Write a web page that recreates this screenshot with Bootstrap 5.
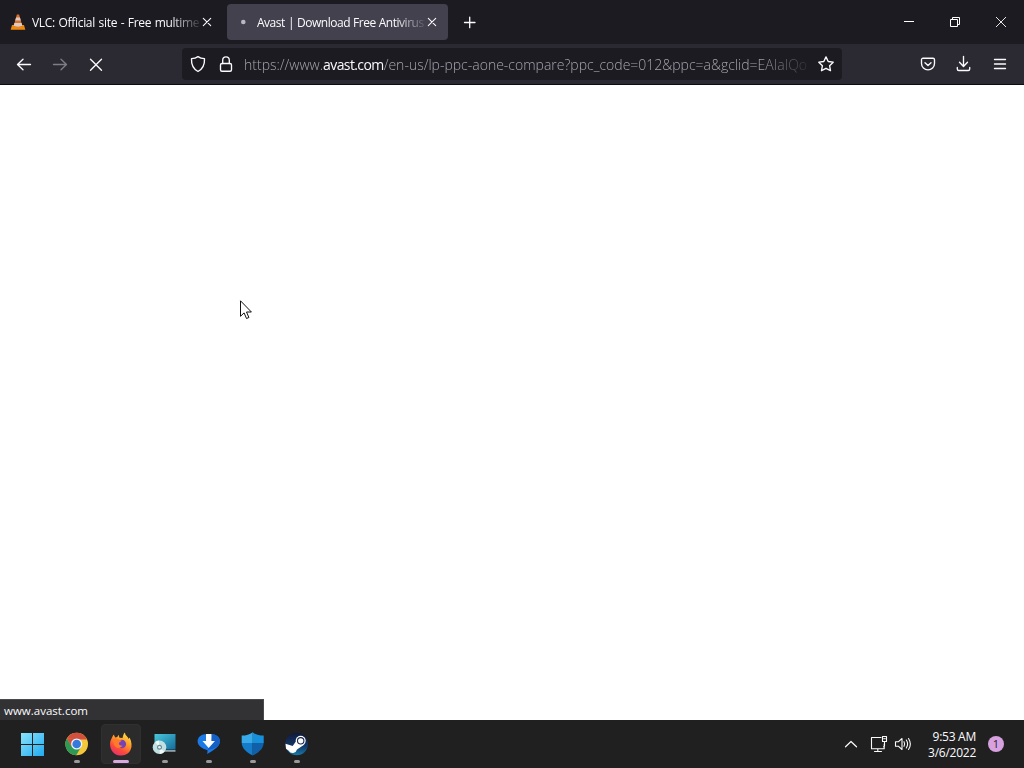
<!DOCTYPE html>
<html lang="en">
<head>
<meta charset="utf-8">
<meta name="viewport" content="width=device-width, initial-scale=1">
<title>Avast | Download Free Antivirus</title>
<link href="https://cdn.jsdelivr.net/npm/bootstrap@5.3.0/dist/css/bootstrap.min.css" rel="stylesheet">
<style>
body{font-family:"Open Sans","Noto Sans",sans-serif;font-size:12px;line-height:16px;color:#fbfbfe;background:#fff}
svg{display:block;flex:none;overflow:visible}
.ln{fill:none;stroke:#fbfbfe;stroke-width:1.35;stroke-linecap:round;stroke-linejoin:round}
.tabstrip{height:44px;background:#1c1b22}
.tab{height:36px;border-radius:4px}
.tab-first{width:221px;padding-left:8px}
.tab-active{width:221px;background:#42414d;margin-left:2px}
.tab-label{width:168px;padding-top:2px;white-space:nowrap;-webkit-mask-image:linear-gradient(90deg,#000 138px,transparent 171px);mask-image:linear-gradient(90deg,#000 138px,transparent 171px)}
.t1{letter-spacing:-.31px;word-spacing:.8px}
.t2{letter-spacing:-.48px;word-spacing:.4px}
.winbtn{width:46px}
.toolbar{height:41px;background:#2b2a33;border-bottom:1px solid #0c0c0d}
.cell{width:36px}
.urlbar{width:660px;height:32px;background:#1c1b22;border-radius:4px;margin-left:68px}
.url{width:566px;padding-top:2px;white-space:nowrap;font-size:14px;line-height:20px;font-weight:300;color:#a6a5ad;-webkit-mask-image:linear-gradient(90deg,#000 515px,transparent 572px);mask-image:linear-gradient(90deg,#000 515px,transparent 572px);letter-spacing:0}
.url b{color:#fbfbfe;font-weight:400;letter-spacing:-.6px}
.status{width:264px;height:21px;background:#323234;border-top:1px solid #4a4a4d;border-right:1px solid #4a4a4d;padding:3px 4px 0;font-size:11.5px}
.taskbar{height:48px;background:#202020;padding-left:10px}
.app{width:44px;height:48px}
.app-on{width:40px;height:40px;margin:0 2px;background:#2b2b2b;border:1px solid #303030;border-radius:4px}
.dot{width:6px;height:3px;border-radius:2px;background:#9a9a9a;bottom:5px;left:20px}
.dot-on{width:16px;background:#d8a8df;left:11px;bottom:0}
.clock{width:50px;margin-left:14px;padding-top:1px;letter-spacing:-.25px}
.note{width:16px;height:16px;margin-left:12px;background:#d7a0df;color:#2a1b2e;font-size:11px}
.pointer{left:240px;top:300px}
</style>
</head>
<body class="vh-100 d-flex flex-column overflow-hidden">
<header>
  <div class="tabstrip d-flex align-items-center">
    <div class="tab tab-first d-flex align-items-center ms-1 ps-1">
      <svg width="20" height="16" viewBox="0 0 20 16"><path d="M4 11h12l1.300 4.800H2.700z" fill="#f08a0c"/><path d="M8.900.6h2.200l3.400 11.600q-4.500 2-9 0z" fill="#d9702b"/><path d="M8.100 3.400h3.800l.9 3.200H7.200zM6.400 9h7.200l.8 2.700q-4.400 2-8.800 0z" fill="#dccbc4"/></svg>
      <span class="tab-label t1" style="margin-left:4px">VLC: Official site - Free multime</span>
      <svg width="16" height="16" viewBox="0 0 16 16" class="ln" style="margin-left:-1px"><path d="M4.300 4.300l7.400 7.400M11.700 4.300l-7.400 7.400" stroke-width="1.100"/></svg>
    </div>
    <div class="tab tab-active d-flex align-items-center">
      <svg width="30" height="16" viewBox="0 0 30 16"><circle cx="16.300" cy="8" r="2.300" fill="#b9b8c2"/></svg>
      <span class="tab-label t2">Avast | Download Free Antivirus</span>
      <svg width="16" height="16" viewBox="0 0 16 16" class="ln" style="margin-left:-1px"><path d="M4.300 4.300l7.400 7.400M11.700 4.300l-7.400 7.400" stroke-width="1.100"/></svg>
    </div>
    <svg width="43" height="16" viewBox="0 0 43 16" class="ln"><path d="M16.500 8.500h10.500M21.700 3.200v10.500" stroke-width="1.300"/></svg>
    <div class="d-flex ms-auto">
      <div class="winbtn d-flex justify-content-center"><svg width="16" height="16" viewBox="0 0 16 16"><path d="M3 7.500h10" stroke="#fff"/></svg></div>
      <div class="winbtn d-flex justify-content-center"><svg width="16" height="16" viewBox="0 0 16 16" fill="none" stroke="#fff"><path d="M3.500 5.500h7v7h-7zM5.500 5V3.500h7v7H11"/></svg></div>
      <div class="winbtn d-flex justify-content-center"><svg width="16" height="16" viewBox="0 0 16 16" stroke="#fff"><path d="M3 3l10 10M13 3L3 13" stroke-width=".9"/></svg></div>
    </div>
  </div>
  <div class="toolbar d-flex align-items-center">
    <div class="cell d-flex justify-content-center" style="margin-left:6px"><svg width="16" height="16" viewBox="0 0 16 16" class="ln"><path d="M14.500 8.500H1.500M7 3.200L1.500 8.500 7 13.800"/></svg></div>
    <div class="cell d-flex justify-content-center"><svg width="16" height="16" viewBox="0 0 16 16" class="ln" opacity=".4"><path d="M1.500 8.500h13M9 3.200l5.500 5.300L9 13.800"/></svg></div>
    <div class="cell d-flex justify-content-center"><svg width="16" height="16" viewBox="0 0 16 16" class="ln"><path d="M2.500 3.200l11 11M13.500 3.200l-11 11"/></svg></div>
    <div class="urlbar d-flex align-items-center">
      <svg width="16" height="16" viewBox="0 0 16 16" class="ln ms-2"><path d="M8 .6c2 1.500 4 2 6.500 2.100.3 5.800-1.500 10-6.500 12.800C3 12.700 1.200 8.500 1.500 2.700 4 2.600 6 2.100 8 .6z"/></svg>
      <svg width="16" height="16" viewBox="0 0 16 16" class="ln" style="margin-left:12px"><rect x="2.500" y="7.500" width="11" height="7.700" rx="1.500"/><path d="M4.700 7.500V4.200a3.300 3.300 0 016.600 0v3.300"/></svg>
      <div class="url" style="margin-left:10px">https://www.<b>avast.com</b>/en-us/lp-ppc-aone-compare?ppc_code=012&amp;ppc=a&amp;gclid=EAIaIQo</div>
      <svg width="16" height="16" viewBox="0 0 16 16" class="ln" style="margin-left:8px"><path d="M8 .9l2.200 4.600 5 .7-3.600 3.500.9 5L8 12.300l-4.500 2.400.9-5L.8 6.200l5-.7z"/></svg>
    </div>
    <div class="d-flex ms-auto" style="margin-right:6px">
      <div class="cell d-flex justify-content-center"><svg width="16" height="16" viewBox="0 0 16 16" class="ln"><path d="M3 2.200h10a1.500 1.500 0 011.500 1.500V7.500a6.500 6.300 0 01-13 0V3.700A1.500 1.500 0 013 2.200z"/><path d="M5 6.700l3 2.900 3-2.900"/></svg></div>
      <div class="cell d-flex justify-content-center"><svg width="16" height="16" viewBox="0 0 16 16" class="ln"><path d="M7.500.3v10M3.500 6.200l4 4.300 4-4.300M1.300 11.500v1.500q0 1.500 1.500 1.500h9.400q1.500 0 1.500-1.500v-1.500"/></svg></div>
      <div class="cell d-flex justify-content-center"><svg width="16" height="16" viewBox="0 0 16 16" class="ln"><path d="M2.500 3.500h11M2.500 8h11M2.500 12.500h11"/></svg></div>
    </div>
  </div>
</header>
<main class="flex-grow-1 d-flex flex-column justify-content-end">
  <div class="status"><span>www.avast.com</span></div>
</main>
<footer class="taskbar d-flex align-items-center">
  <div class="app d-flex align-items-center justify-content-center">
    <svg width="24" height="24" viewBox="0 0 24 24"><defs><linearGradient id="win" x2="1" y2="1"><stop stop-color="#8be4fb"/><stop offset="1" stop-color="#20aaf0"/></linearGradient></defs><path d="M1 1h11v11H1zM13 1h11v11H13zM1 13h11v11H1zM13 13h11v11H13z" fill="url(#win)"/></svg>
  </div>
  <div class="app position-relative d-flex align-items-center justify-content-center">
    <svg width="24" height="24" viewBox="0 0 24 24"><circle cx="12.700" cy="12" r="11.300" fill="#f3c73a"/><path d="M2.900 6.300A11.300 11.300 0 0122.500 6.300H12.700z" fill="#d3503f"/><path d="M2.900 6.300A11.300 11.300 0 0012.200 23.300l5-8.500-9.500-.2z" fill="#2c9a54"/><path d="M2.900 6.300L7.800 15l2-7.500h13.200l-.7-1.600H12z" fill="#d3503f"/><circle cx="12.700" cy="12" r="5.600" fill="#eef3f8"/><circle cx="12.700" cy="12" r="4.300" fill="#3579dc"/></svg>
    <span class="dot position-absolute"></span>
  </div>
  <div class="app-on position-relative d-flex align-items-center justify-content-center" style="margin-left:3px;margin-right:1px">
    <svg width="24" height="24" viewBox="-.5 0 24 24"><defs><linearGradient id="fox" x1=".8" y1="0" x2=".25" y2="1"><stop stop-color="#ffe449"/><stop offset=".4" stop-color="#ff9a26"/><stop offset=".72" stop-color="#fb4a3b"/><stop offset="1" stop-color="#e72d72"/></linearGradient></defs><path d="M3 4.500l1.200-2 1.500 3 2.100-.6 1.200-2.100 1 3 3 .2c.8-2.300.8-4.200 2.500-5.500 0 3.200 2.800 3.500 3.700 6.500l.9-1.500c4.500 8.600 1.200 17.700-8 17.900C3 24 .1 16.200.6 10.700 1 8 1.800 7.300 3 4.500z" fill="url(#fox)"/><circle cx="12.300" cy="12" r="4.300" fill="#7543b5"/><path d="M4 7c3-.8 4.500-.2 5.700 1.100l2.500.5c-.6 1.300-2.100 1.300-2.800 2.500-.4 1.500 1.300 3 3.600 2.400-1.300 3-7.100 3.800-8.600-.9z" fill="#ff7a2b"/></svg>
    <span class="dot dot-on position-absolute"></span>
  </div>
  <div class="app position-relative d-flex align-items-center justify-content-center">
    <svg width="24" height="24" viewBox="0 0 24 24"><defs><linearGradient id="scr" x2="1" y2="1"><stop stop-color="#49c9dc"/><stop offset="1" stop-color="#146a9b"/></linearGradient></defs><path d="M2.500 2h21v15.500h-21z" fill="url(#scr)"/><path d="M9.500 18h14v1.800h-14z" fill="#90a1a7"/><circle cx="7.500" cy="15.200" r="6.800" fill="#c2dfe1"/><path d="M7.500 15.200L3 10.100a6.800 6.800 0 014-1.700zM7.500 15.200l5 4.600a6.800 6.800 0 01-4.600 2.200z" fill="#f0f8f8"/><circle cx="7.500" cy="15.200" r="2.500" fill="#648b96"/><circle cx="7.500" cy="15.200" r="1.300" fill="#e9f1f2"/></svg>
    <span class="dot position-absolute"></span>
  </div>
  <div class="app position-relative d-flex align-items-center justify-content-center">
    <svg width="24" height="24" viewBox="-.7 0 24 24"><path d="M8 2.200h8c5 .5 7.700 4 7.200 7.800-.4 4.500-5.200 7-8.200 9.300L10.500 22l.4-3.800C6 17 .9 14 .9 9.300.9 5.500 4 2.700 8 2.200z" fill="#1b7ae6"/><path d="M16 2.200c8 1.300 9 8.300 4.500 12.300-3 2.300-7.500 3.300-9.600 3.700z" fill="#1460c7"/><path d="M9.300 2h5.400v7h3.500L12 16 5.800 9h3.500z" fill="#fff"/></svg>
    <span class="dot position-absolute"></span>
  </div>
  <div class="app position-relative d-flex align-items-center justify-content-center">
    <svg width="24" height="24" viewBox="-.7 0 24 24"><path d="M12 .2c3 2.500 6.500 3.300 11 3.400V11H12z" fill="#1790dc"/><path d="M12 .2C9 2.700 5.500 3.500 1 3.600V11h11z" fill="#39aae9"/><path d="M1 11h11v12.500C5.500 20.500 1.400 16.300 1 11z" fill="#147ccb"/><path d="M12 11h11c-.4 5.300-4.500 9.500-11 12.500z" fill="#105fa9"/></svg>
    <span class="dot position-absolute"></span>
  </div>
  <div class="app position-relative d-flex align-items-center justify-content-center">
    <svg width="24" height="24" viewBox="-.7 0 24 24"><defs><linearGradient id="stm" x2="0" y2="1"><stop stop-color="#11183b"/><stop offset=".6" stop-color="#123a69"/><stop offset="1" stop-color="#187aa8"/></linearGradient></defs><circle cx="12" cy="12" r="11.300" fill="url(#stm)"/><path d="M.8 11.800l7.200 2.200 3.500-5 7.500 3.900-6.700 4.600a4.500 4.500 0 01-8.300 1.200L1.300 16.800z" fill="#fff"/><circle cx="16" cy="8.800" r="5" fill="#fff"/><circle cx="16" cy="8.800" r="3.200" fill="#fff" stroke="#17294f" stroke-width="1.100"/></svg>
    <span class="dot position-absolute"></span>
  </div>
  <div class="d-flex align-items-center ms-auto" style="margin-right:20px">
    <svg width="14" height="16" viewBox="0 0 14 16" class="ln"><path d="M1.500 10.800L7 5.500l5.500 5.300" stroke-width="1.200"/></svg>
    <svg width="18" height="18" viewBox="0 0 18 18" class="ln" style="margin-left:12px"><path d="M11 2.500H1.500v11.200h12.700V9M4.500 16.500h7M7.800 13.700v2.800M12.500 1.500h4v5h-4zM14.500 6.500v4.200q0 1-1 1" stroke-width="1.100"/><path d="M13.700 3.700h1.600" stroke-width="1"/></svg>
    <svg width="18" height="16" viewBox="0 0 18 16" class="ln" style="margin-left:6px"><path d="M1.500 5.800h2.800L8 2.500v11l-3.700-3.300H1.500zM10 5.700q1.300 2.300 0 4.600M12.300 4q2.600 4 0 8M14.500 2.500q3.700 5.500 0 11" stroke-width="1.100"/></svg>
    <div class="clock text-end text-nowrap">9:53 AM<br>3/6/2022</div>
    <div class="note rounded-circle d-flex align-items-center justify-content-center">1</div>
  </div>
</footer>
<svg class="pointer position-absolute" width="13" height="20" viewBox="0 0 13 20"><path d="M.5.800v15.500l3.600-3.400 2.400 5.600 2.400-1-2.400-5.500h4.900z" fill="#fff" stroke="#111" stroke-width="1"/></svg>
<script src="https://cdn.jsdelivr.net/npm/bootstrap@5.3.0/dist/js/bootstrap.bundle.min.js"></script>
</body>
</html>
